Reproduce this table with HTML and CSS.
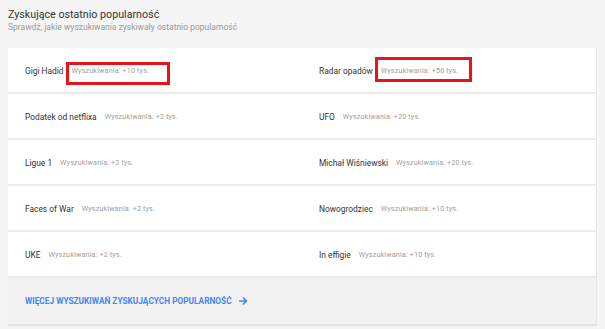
FILE: index.html
```html
<!DOCTYPE html>
<html lang="pl">
<head>
<meta charset="utf-8">
<link rel="stylesheet" href="styles.css">
</head>
<body>
<div class="page">
  <header class="head">
    <h1 class="title">Zyskujące ostatnio popularność</h1>
    <p class="sub">Sprawdź, jakie wyszukiwania zyskiwały ostatnio popularność</p>
  </header>
  <section class="card">
    <div class="grid">
      <div class="cell"><span class="name">Gigi Hadid</span><span class="meta">Wyszukiwania: +10 tys.</span><span class="mark mark-a"></span></div>
      <div class="cell"><span class="name">Radar opadów</span><span class="meta">Wyszukiwania: +50 tys.</span><span class="mark mark-b"></span></div>
      <div class="cell"><span class="name">Podatek od netflixa</span><span class="meta">Wyszukiwania: +2 tys.</span></div>
      <div class="cell"><span class="name">UFO</span><span class="meta">Wyszukiwania: +20 tys.</span></div>
      <div class="cell"><span class="name">Ligue 1</span><span class="meta">Wyszukiwania: +2 tys.</span></div>
      <div class="cell"><span class="name">Michał Wiśniewski</span><span class="meta">Wyszukiwania: +20 tys.</span></div>
      <div class="cell"><span class="name">Faces of War</span><span class="meta">Wyszukiwania: +2 tys.</span></div>
      <div class="cell"><span class="name">Nowogrodziec</span><span class="meta">Wyszukiwania: +10 tys.</span></div>
      <div class="cell"><span class="name">UKE</span><span class="meta">Wyszukiwania: +2 tys.</span></div>
      <div class="cell"><span class="name">In effigie</span><span class="meta">Wyszukiwania: +10 tys.</span></div>
    </div>
    <footer class="foot">
      <a class="more" href="#">WIĘCEJ WYSZUKIWAŃ ZYSKUJĄCYCH POPULARNOŚĆ
        <svg class="arrow" width="10" height="10" viewBox="0 0 10 10"><path d="M1 5h7.5M5 1.5 8.5 5 5 8.5" fill="none" stroke="#4285f4" stroke-width="1.6"/></svg>
      </a>
    </footer>
  </section>
</div>
</body>
</html>
```

FILE: styles.css
```css
html, body {
  margin: 0;
  padding: 0;
  background: #f5f5f5;
  font-family: Roboto, "Liberation Sans", sans-serif;
}
.page {
  padding: 0 8px;
  height: 329px;
  box-sizing: border-box;
}
.head {
  padding-top: 9px;
  height: 48px;
  box-sizing: border-box;
}
.title {
  margin: 0;
  font-size: 10.7px;
  font-weight: 400;
  color: #333;
  line-height: 12px;
}
.sub {
  margin: 1px 0 0;
  font-size: 8.5px;
  color: #9a9a9a;
  line-height: 11px;
}
.card {
  width: 589px;
  background: #f2f2f2;
  border-right: 1px solid #e6e6e6;
  border-bottom: 2px solid #e3e3e3;
  box-sizing: border-box;
}
.grid {
  display: grid;
  grid-template-columns: 1fr 1fr;
  background: #fff;
}
.cell {
  position: relative;
  height: 46px;
  box-sizing: border-box;
  border-bottom: 2px solid #ececec;
  display: flex;
  align-items: center;
  padding-left: 17px;
  padding-top: 1px;
  gap: 8px;
}
.name {
  font-size: 8.4px;
  color: #333;
}
.meta {
  font-size: 7.2px;
  color: #9e9e9e;
  letter-spacing: 0.15px;
}
.mark {
  position: absolute;
  border: 3px solid #e8141c;
  box-sizing: border-box;
}
.mark-a {
  left: 58px;
  top: 14px;
  width: 104px;
  height: 23px;
}
.mark-b {
  left: 73px;
  top: 9px;
  width: 97px;
  height: 25px;
}
.foot {
  height: 46px;
  display: flex;
  align-items: center;
  padding-left: 17px;
}
.more {
  display: flex;
  align-items: center;
  gap: 6px;
  font-size: 8.3px;
  font-weight: 700;
  color: #4285f4;
  text-decoration: none;
}
.arrow {
  display: block;
}
```
